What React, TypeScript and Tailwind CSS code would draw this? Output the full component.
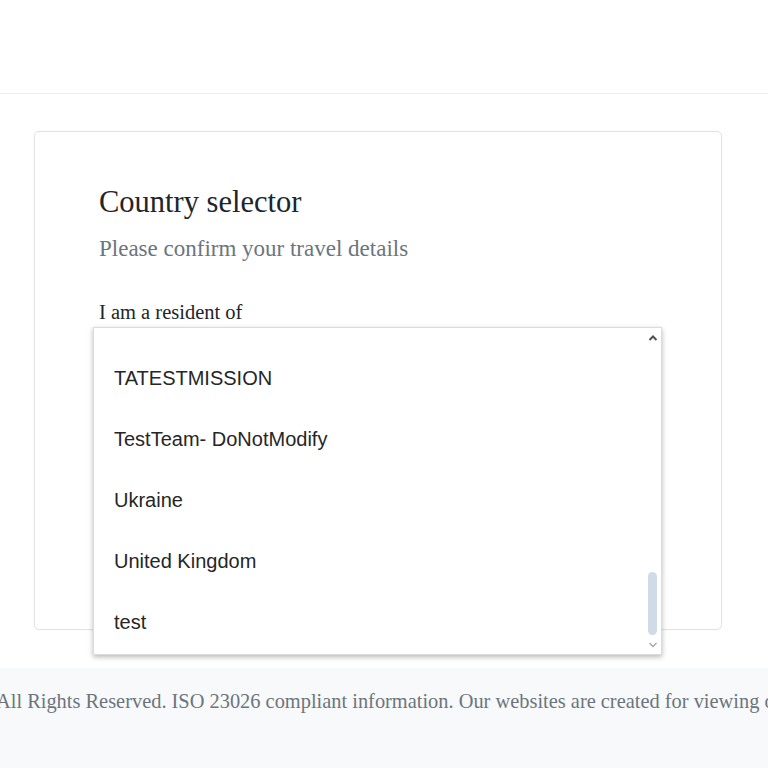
import React from "react";

const items = ["TATESTMISSION", "TestTeam- DoNotModify", "Ukraine", "United Kingdom", "test"];

export default function App() {
  return (
    <div className="w-[768px] h-[768px] overflow-hidden bg-white flex flex-col" style={{ fontFamily: '"Liberation Serif", serif' }}>
      <header className="h-[94px] shrink-0 border-b border-[#eeeeee] bg-white" />
      <main className="px-[34px] pt-[37px] shrink-0">
        <div className="relative h-[499px] w-[688px] rounded-[5px] border border-[#e3e3e3] bg-white shadow-[0_0_3px_rgba(0,0,0,0.04)]">
          <div className="pl-[64px] pt-[53px]">
            <h1 className="text-[30.5px] leading-[34px] text-[#212529] font-normal">Country selector</h1>
            <p className="mt-[18px] text-[23px] leading-[24px] text-[#6c757d]">Please confirm your travel details</p>
            <p className="mt-[40px] text-[20.5px] leading-[22px] text-[#212529]">I am a resident of</p>
          </div>
          <div
            className="absolute left-[58px] top-[195px] w-[569px] h-[328px] bg-white border border-[#dcdcdc] shadow-[0_2px_5px_rgba(0,0,0,0.28)] flex"
            style={{ fontFamily: '"Liberation Sans", Arial, sans-serif' }}
          >
            <ul className="flex-1 pt-[19px]">
              {items.map((it) => (
                <li key={it} className="h-[61px] flex items-center pl-[20px] text-[20px] text-[#262626]">
                  {it}
                </li>
              ))}
            </ul>
            <div className="w-[17px] flex flex-col items-center pt-[5px] pb-[5px]">
              <svg width="10" height="8" viewBox="0 0 10 8" className="mt-[1px]">
                <path d="M1.5 6 L5 2.5 L8.5 6" fill="none" stroke="#505050" strokeWidth="2" />
              </svg>
              <div className="flex-1" />
              <div className="w-[9px] h-[63px] rounded-full bg-[#cfdbe6]" />
              <svg width="10" height="8" viewBox="0 0 10 8" className="mt-[6px]">
                <path d="M1.5 2 L5 5.5 L8.5 2" fill="none" stroke="#a8a8a8" strokeWidth="1.4" />
              </svg>
            </div>
          </div>
        </div>
      </main>
      <footer className="mt-[38px] flex-1 bg-[#f8f9fa] overflow-hidden">
        <p className="whitespace-nowrap ml-[-4px] mt-[22px] text-[20.4px] leading-[22px] text-[#6c757d]">
          All Rights Reserved. ISO 23026 compliant information. Our websites are created for viewing on modern browsers.
        </p>
      </footer>
    </div>
  );
}
